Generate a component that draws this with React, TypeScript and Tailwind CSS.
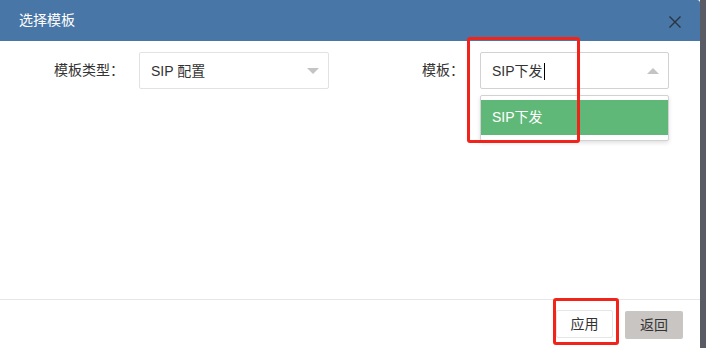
const font = { fontFamily: '"Liberation Sans", "Noto Sans CJK SC", sans-serif' };

export default function App() {
  return (
    <div className="w-[706px] h-[348px] flex bg-white overflow-hidden" style={font}>
      <div className="relative w-[700px] h-full flex flex-col bg-white">
        {/* Header */}
        <div className="h-[41px] shrink-0 bg-[#4876a7] rounded-tr-[3px] flex items-center justify-between pl-[19px] pr-[19px]">
          <span className="text-[14px] text-white">选择模板</span>
          <svg width="12" height="12" viewBox="0 0 12 12" className="mt-[3px]">
            <path d="M0.5 0.5 L11.5 11.5 M11.5 0.5 L0.5 11.5" stroke="#2a3340" strokeWidth="1.4" fill="none" />
          </svg>
        </div>

        {/* Body */}
        <div className="flex-1 pt-[11px]">
          <div className="flex items-center text-[14px] text-[#333]">
            <span className="w-[124px] pl-[54px]">模板类型：</span>
            <div className="ml-[15px] w-[190px] h-[37px] border border-[#e2e2e2] rounded-[2px] flex items-center justify-between pl-[11px] pr-[9px]">
              <span className="mt-[2px]">SIP 配置</span>
              <span className="w-0 h-0 border-l-[6px] border-r-[6px] border-t-[6px] border-l-transparent border-r-transparent border-t-[#c4c4c4]" />
            </div>
            <span className="ml-[93px] w-[58px]">模板：</span>
            <div className="relative w-[189px] h-[37px] border border-[#d2d2d2] rounded-[2px] flex items-center justify-between pl-[11px] pr-[9px]">
              <span className="flex items-center mt-[2px]">
                SIP下发
                <span className="ml-[1px] w-px h-[17px] bg-black" />
              </span>
              <span className="w-0 h-0 border-l-[6px] border-r-[6px] border-b-[6px] border-l-transparent border-r-transparent border-b-[#c4c4c4]" />
              {/* dropdown */}
              <div className="absolute left-[-1px] top-[42px] w-[189px] bg-white border border-[#d2d2d2] rounded-[2px] shadow-[0_2px_4px_rgba(0,0,0,0.12)] pt-[4px] pb-[5px]">
                <div className="h-[35px] bg-[#5fb878] text-white flex items-center pl-[11px]">SIP下发</div>
              </div>
            </div>
          </div>
        </div>

        {/* Footer */}
        <div className="h-[49px] shrink-0 border-t border-[#e6e6e6] flex items-start justify-end pt-[10px] pr-[17px] gap-[12px] text-[14px] text-[#333]">
          <button className="w-[57px] h-[28px] bg-white border border-[#e6e6e6] rounded-[2px]">应用</button>
          <button className="w-[58px] h-[28px] mt-[1px] bg-[#c9c5c2] rounded-[2px]">返回</button>
        </div>

        {/* red annotations */}
        <div className="absolute left-[467px] top-[37px] w-[113px] h-[106px] border-[3px] border-[#f2231b] rounded-[3px]" />
        <div className="absolute left-[553px] top-[298px] w-[66px] h-[47px] border-[3px] border-[#f2231b] rounded-[3px]" />
      </div>
      <div className="w-[6px] h-full bg-[#595c64]" />
    </div>
  );
}
